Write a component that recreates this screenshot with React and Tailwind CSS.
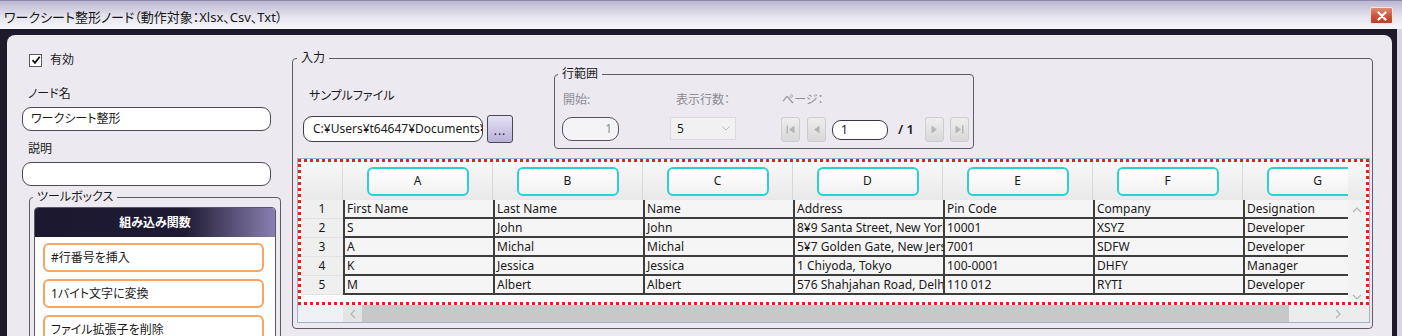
import React from "react";

const cols = ["A", "B", "C", "D", "E", "F", "G"];
const rows = [
  ["1", "First Name", "Last Name", "Name", "Address", "Pin Code", "Company", "Designation"],
  ["2", "S", "John", "John", "8¥9 Santa Street, New York", "10001", "XSYZ", "Developer"],
  ["3", "A", "Michal", "Michal", "5¥7 Golden Gate, New Jersey", "7001", "SDFW", "Developer"],
  ["4", "K", "Jessica", "Jessica", "1 Chiyoda, Tokyo", "100-0001", "DHFY", "Manager"],
  ["5", "M", "Albert", "Albert", "576 Shahjahan Road, Delhi", "110 012", "RYTI", "Developer"],
];
const tools = ["#行番号を挿入", "1バイト文字に変換", "ファイル拡張子を削除"];

function NavBtn({ children }) {
  return (
    <div className="w-[19px] h-[25px] rounded-[3px] border border-[#cdcdcd] bg-[linear-gradient(to_bottom,#eeeeee,#d8d8d8)] flex items-center justify-center">
      {children}
    </div>
  );
}

function Chev({ dir }) {
  const d = {
    up: "M1 6 L5 2 L9 6",
    down: "M1 2 L5 6 L9 2",
    left: "M6 1 L2 5 L6 9",
    right: "M2 1 L6 5 L2 9",
  }[dir];
  const vert = dir === "up" || dir === "down";
  return (
    <svg width={vert ? 10 : 8} height={vert ? 8 : 10} viewBox={vert ? "0 0 10 8" : "0 0 8 10"}>
      <path d={d} fill="none" stroke="#b4b4b4" strokeWidth="1.2" />
    </svg>
  );
}

export default function App() {
  return (
    <div className="w-[1402px] h-[336px] overflow-hidden flex flex-col bg-[#1e1a2c] font-['Noto_Sans','Noto_Sans_CJK_JP',sans-serif] [font-feature-settings:'palt'] text-[#1a1a1a]">
      {/* title bar */}
      <div className="h-[29px] shrink-0 flex items-start justify-between pl-[4px] pr-[9px] border-t border-[#8d88a8] bg-[linear-gradient(to_bottom,#bcb7d2,#e8e7f0_60%,#f6f6fa)]">
        <span className="mt-[8px] text-[13px] leading-[16px] text-[#161616]">ワークシート整形ノード（動作対象：Xlsx、Csv、Txt）</span>
        <div className="mt-[6px] w-[23px] h-[17px] rounded-[2px] border border-[#f3e3df] bg-[linear-gradient(to_bottom,#e08a74,#c9533c_55%,#b8412c)] flex items-center justify-center">
          <svg width="10" height="10" viewBox="0 0 10 10">
            <path d="M1.5 1.5 L8.5 8.5 M8.5 1.5 L1.5 8.5" stroke="#fff" strokeWidth="2.2" strokeLinecap="round" />
          </svg>
        </div>
      </div>

      {/* frame */}
      <div className="flex-1 flex min-h-0">
        <div className="flex-1 pl-[7px] pr-[5px] pt-[6px] flex min-h-0">
          <div className="flex-1 rounded-t-[8px] bg-[#ece9f0] flex items-start pl-[15px] overflow-hidden">
            {/* left column */}
            <div className="w-[258px] shrink-0 flex flex-col">
              <div className="mt-[17px] h-[16px] flex items-center pl-[7px] gap-[8px]">
                <div className="w-[13px] h-[13px] border border-[#5a5a5a] bg-white flex items-center justify-center">
                  <svg width="10" height="10" viewBox="0 0 10 10">
                    <path d="M1.5 5.2 L4 7.8 L8.7 1.8" fill="none" stroke="#111" strokeWidth="1.8" />
                  </svg>
                </div>
                <span className="text-[12px] leading-[16px]">有効</span>
              </div>
              <div className="mt-[18px] h-[16px] pl-[6px] text-[12px] leading-[16px]">ノード名</div>
              <div className="mt-[5px] h-[24px] w-[249px] rounded-[9px] border border-[#4d4a55] bg-white pl-[8px] flex items-center text-[12px]">
                ワークシート整形
              </div>
              <div className="mt-[10px] h-[16px] pl-[6px] text-[12px] leading-[16px]">説明</div>
              <div className="mt-[5px] h-[24px] w-[249px] rounded-[9px] border border-[#4d4a55] bg-white" />
              <fieldset className="mt-[3px] ml-[7px] w-[252px] h-[200px] border border-[#5f5c68] rounded-[4px] px-[4px]">
                <legend className="-ml-[1px] px-[4px] text-[12px] leading-[16px]">ツールボックス</legend>
                <div className="mt-[2px] h-[180px] rounded-t-[4px] border border-[#5a5766] bg-white flex flex-col">
                  <div className="h-[29px] shrink-0 rounded-t-[3px] bg-[linear-gradient(to_right,#1c1830_0%,#1e1a33_62%,#8a7fb0_100%)] flex items-center justify-center text-white text-[12px] font-bold">
                    組み込み関数
                  </div>
                  <div className="pl-[8px] pt-[6px] flex flex-col gap-[7px]">
                    {tools.map((t) => (
                      <div key={t} className="w-[221px] h-[29px] shrink-0 rounded-[6px] border-2 border-[#f5a564] bg-white pl-[6px] flex items-center text-[12px]">
                        {t}
                      </div>
                    ))}
                  </div>
                </div>
              </fieldset>
            </div>

            {/* right group */}
            <fieldset className="ml-[12px] mt-[15px] w-[1081px] shrink-0 border border-[#5f5c68] rounded-[4px] pl-[4px] pr-[2px] pb-[5px]">
              <legend className="px-[4px] text-[12px] leading-[16px]">入力</legend>
              <div className="h-[83px] flex items-start">
                <div className="ml-[6px] w-[211px] shrink-0 flex flex-col">
                  <div className="mt-[22px] h-[16px] pl-[6px] text-[12px] leading-[16px]">サンプルファイル</div>
                  <div className="mt-[11px] flex items-center gap-[4px]">
                    <div className="w-[180px] h-[26px] rounded-[9px] border border-[#3f3c48] bg-white pl-[9px] flex items-center overflow-hidden whitespace-nowrap text-[12px]">
                      C:¥Users¥t64647¥Documents¥
                    </div>
                    <div className="w-[26px] h-[28px] rounded-[3px] border border-[#4a4758] bg-[linear-gradient(to_bottom,#e6e2f4,#b9b1d9)] flex items-end justify-center pb-[5px] text-[12px] leading-none tracking-[1px]">
                      ...
                    </div>
                  </div>
                </div>

                <fieldset className="ml-[40px] w-[420px] h-[83px] shrink-0 border border-[#5f5c68] rounded-[4px] pl-[7px] pr-[4px]">
                  <legend className="-ml-[4px] px-[4px] text-[12px] leading-[16px]">行範囲</legend>
                  <div className="flex pt-[10px]">
                    <div className="w-[57px] shrink-0 flex flex-col">
                      <div className="h-[16px] pl-[1px] text-[12px] leading-[16px] text-[#8e8c95]">開始:</div>
                      <div className="mt-[9px] h-[24px] rounded-[10px] border border-[#55525e] bg-[#f4f3f6] pr-[6px] flex items-center justify-end text-[12px] text-[#8e8c95]">
                        1
                      </div>
                    </div>
                    <div className="ml-[51px] w-[66px] shrink-0 flex flex-col">
                      <div className="h-[16px] pl-[6px] text-[12px] leading-[16px] text-[#8e8c95] whitespace-nowrap">表示行数：</div>
                      <div className="mt-[9px] h-[23px] border border-[#dcdcdc] bg-[#f1f1f1] flex items-center justify-between pl-[6px] pr-[5px] text-[12px]">
                        <span>5</span>
                        <svg width="8" height="5" viewBox="0 0 8 5">
                          <path d="M0.5 0.5 L4 4 L7.5 0.5" fill="none" stroke="#b8b8b8" strokeWidth="1" />
                        </svg>
                      </div>
                    </div>
                    <div className="ml-[45px] shrink-0 flex flex-col">
                      <div className="h-[16px] pl-[1px] text-[12px] leading-[16px] text-[#8e8c95]">ページ：</div>
                      <div className="mt-[9px] h-[25px] flex items-center">
                        <NavBtn>
                          <svg width="9" height="9" viewBox="0 0 9 9"><rect x="0.5" y="0.5" width="1.5" height="8" fill="#b5b5b5" /><path d="M8.5 0.5 L3 4.5 L8.5 8.5 Z" fill="#b5b5b5" /></svg>
                        </NavBtn>
                        <div className="ml-[7px]">
                          <NavBtn>
                            <svg width="7" height="9" viewBox="0 0 7 9"><path d="M6.5 0.5 L1 4.5 L6.5 8.5 Z" fill="#b5b5b5" /></svg>
                          </NavBtn>
                        </div>
                        <div className="ml-[6px] w-[56px] h-[20px] rounded-[9px] border-[1.5px] border-[#3a3744] bg-white pl-[8px] flex items-center text-[12px]">1</div>
                        <span className="ml-[10px] text-[13px] font-semibold">/ 1</span>
                        <div className="ml-[11px]">
                          <NavBtn>
                            <svg width="7" height="9" viewBox="0 0 7 9"><path d="M0.5 0.5 L6 4.5 L0.5 8.5 Z" fill="#b5b5b5" /></svg>
                          </NavBtn>
                        </div>
                        <div className="ml-[6px]">
                          <NavBtn>
                            <svg width="9" height="9" viewBox="0 0 9 9"><path d="M0.5 0.5 L6 4.5 L0.5 8.5 Z" fill="#b5b5b5" /><rect x="7" y="0.5" width="1.5" height="8" fill="#b5b5b5" /></svg>
                          </NavBtn>
                        </div>
                      </div>
                    </div>
                  </div>
                </fieldset>
              </div>

              {/* grid */}
              <div className="mt-[9px] border border-[#9fb2c6] bg-white flex flex-col">
                <div className="h-[146px] border-[3px] border-dotted border-[#ee1c1c] flex">
                  <div className="w-[1047px] shrink-0 overflow-hidden flex flex-col">
                    <div className="h-[38px] shrink-0 flex bg-[linear-gradient(to_bottom,#f8f8f8,#e9e9e9)]">
                      <div className="w-[42px] shrink-0 border-r border-[#dadada]" />
                      {cols.map((c) => (
                        <div key={c} className="w-[150px] shrink-0 border-r border-[#d8d8d8] flex items-center justify-center">
                          <div className="w-[102px] h-[29px] rounded-[6px] border-2 border-[#2ccfd6] bg-[linear-gradient(to_bottom,#ffffff,#f1f1f1)] flex items-center justify-center text-[12px]">
                            {c}
                          </div>
                        </div>
                      ))}
                    </div>
                    {rows.map((r) => (
                      <div key={r[0]} className="h-[19px] shrink-0 flex">
                        <div className="w-[42px] shrink-0 bg-[#efefef] border-b border-[#e2e2e2] flex items-center justify-center text-[12px]">
                          {r[0]}
                        </div>
                        {r.slice(1).map((v, i) => (
                          <div key={i} className="w-[150px] shrink-0 bg-[#f5f5f5] border-l-2 border-b-2 border-[#3d3d3d] pl-[2px] overflow-hidden whitespace-nowrap text-[12px] leading-[17px]">
                            {v}
                          </div>
                        ))}
                      </div>
                    ))}
                  </div>
                  <div className="flex-1 flex flex-col">
                    <div className="h-[38px] shrink-0 bg-[linear-gradient(to_bottom,#f8f8f8,#e9e9e9)]" />
                    <div className="flex-1 bg-[#f2f2f2] flex flex-col items-center justify-between pt-[6px] pb-[1px]">
                      <Chev dir="up" />
                      <Chev dir="down" />
                    </div>
                  </div>
                </div>
                <div className="h-[17px] flex bg-[#ececec]">
                  <div className="w-[45px] shrink-0 bg-[#eef0f5]" />
                  <div className="w-[19px] shrink-0 bg-[#e4e4e4] flex items-center justify-center">
                    <Chev dir="left" />
                  </div>
                  <div className="w-[927px] shrink-0 bg-[#c8c8c8]" />
                  <div className="w-[59px] shrink-0 flex items-center justify-end pr-[6px]">
                    <Chev dir="right" />
                  </div>
                  <div className="flex-1" />
                </div>
              </div>
            </fieldset>
          </div>
        </div>
        <div className="w-[5px] bg-[#d9d6e2]" />
      </div>
    </div>
  );
}
